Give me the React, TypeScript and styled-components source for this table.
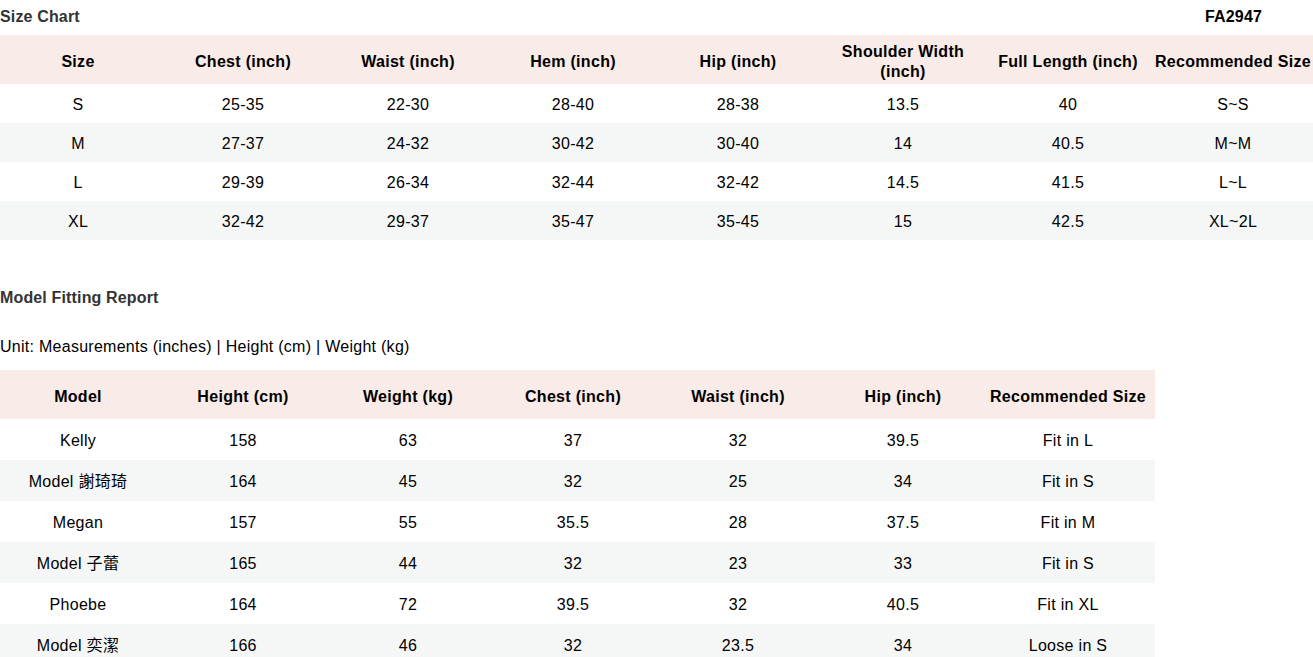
import React from "react";
import styled, { createGlobalStyle } from "styled-components";

const Global = createGlobalStyle`
  html, body { margin: 0; padding: 0; background: #fff; overflow: hidden; }
  body { font-family: "Liberation Sans", Arial, "Noto Sans CJK TC", sans-serif; color: #000; }
`;

const Page = styled.div`
  width: 1313px;
  display: flex;
  flex-direction: column;
`;

const TitleRow = styled.div`
  height: 35px;
  box-sizing: border-box;
  padding: 8px 51px 0 0;
  display: flex;
  justify-content: space-between;
  align-items: flex-start;
`;

const Title = styled.div<{ $dark?: boolean }>`
  font-size: 16px;
  line-height: 18px;
  font-weight: bold;
  letter-spacing: 0.15px;
  color: ${(p) => (p.$dark ? "#000" : "#333")};
`;

const ReportTitle = styled(Title)`
  margin-top: 49px;
`;

const UnitLine = styled.div`
  margin-top: 31px;
  margin-bottom: 14px;
  font-size: 16px;
  line-height: 18px;
  letter-spacing: 0.27px;
  color: #000;
`;

const Table = styled.table<{ $cols: number }>`
  border-collapse: collapse;
  table-layout: fixed;
  width: ${(p) => p.$cols * 165}px;
  flex-shrink: 0;
`;

const HeadRow = styled.tr`
  height: 49px;
  background: #f9ebe7;
`;

const BodyRow = styled.tr<{ $h: number }>`
  height: ${(p) => p.$h}px;
  &:nth-child(even) { background: #f5f7f7; }
`;

const Th = styled.th`
  width: 165px;
  box-sizing: border-box;
  padding: 4px 9px 0 0;
  font-size: 16px;
  line-height: 20px;
  font-weight: bold;
  letter-spacing: 0.3px;
  text-align: center;
  vertical-align: middle;
  color: #000;
`;

const Td = styled.td`
  box-sizing: border-box;
  padding: 2px 9px 0 0;
  font-size: 16px;
  line-height: 20px;
  letter-spacing: 0.3px;
  text-align: center;
  vertical-align: middle;
  color: #000;
  white-space: nowrap;
`;

const sizeHead = [
  "Size",
  "Chest (inch)",
  "Waist (inch)",
  "Hem (inch)",
  "Hip (inch)",
  "Shoulder Width (inch)",
  "Full Length (inch)",
  "Recommended Size",
];

const sizeRows = [
  ["S", "25-35", "22-30", "28-40", "28-38", "13.5", "40", "S~S"],
  ["M", "27-37", "24-32", "30-42", "30-40", "14", "40.5", "M~M"],
  ["L", "29-39", "26-34", "32-44", "32-42", "14.5", "41.5", "L~L"],
  ["XL", "32-42", "29-37", "35-47", "35-45", "15", "42.5", "XL~2L"],
];

const modelHead = [
  "Model",
  "Height (cm)",
  "Weight (kg)",
  "Chest (inch)",
  "Waist (inch)",
  "Hip (inch)",
  "Recommended Size",
];

const modelRows = [
  ["Kelly", "158", "63", "37", "32", "39.5", "Fit in L"],
  ["Model 謝琦琦", "164", "45", "32", "25", "34", "Fit in S"],
  ["Megan", "157", "55", "35.5", "28", "37.5", "Fit in M"],
  ["Model 子蕾", "165", "44", "32", "23", "33", "Fit in S"],
  ["Phoebe", "164", "72", "39.5", "32", "40.5", "Fit in XL"],
  ["Model 奕潔", "166", "46", "32", "23.5", "34", "Loose in S"],
];

function DataTable({ head, rows, rowH }: { head: string[]; rows: string[][]; rowH: number }) {
  return (
    <Table $cols={head.length}>
      <thead>
        <HeadRow>
          {head.map((h) => (
            <Th key={h}>{h}</Th>
          ))}
        </HeadRow>
      </thead>
      <tbody>
        {rows.map((r, i) => (
          <BodyRow key={i} $h={rowH}>
            {r.map((c, j) => (
              <Td key={j}>{c}</Td>
            ))}
          </BodyRow>
        ))}
      </tbody>
    </Table>
  );
}

export default function App() {
  return (
    <>
      <Global />
      <Page>
        <TitleRow>
          <Title>Size Chart</Title>
          <Title $dark>FA2947</Title>
        </TitleRow>
        <DataTable head={sizeHead} rows={sizeRows} rowH={39} />
        <ReportTitle>Model Fitting Report</ReportTitle>
        <UnitLine>Unit: Measurements (inches) | Height (cm) | Weight (kg)</UnitLine>
        <DataTable head={modelHead} rows={modelRows} rowH={41} />
      </Page>
    </>
  );
}
